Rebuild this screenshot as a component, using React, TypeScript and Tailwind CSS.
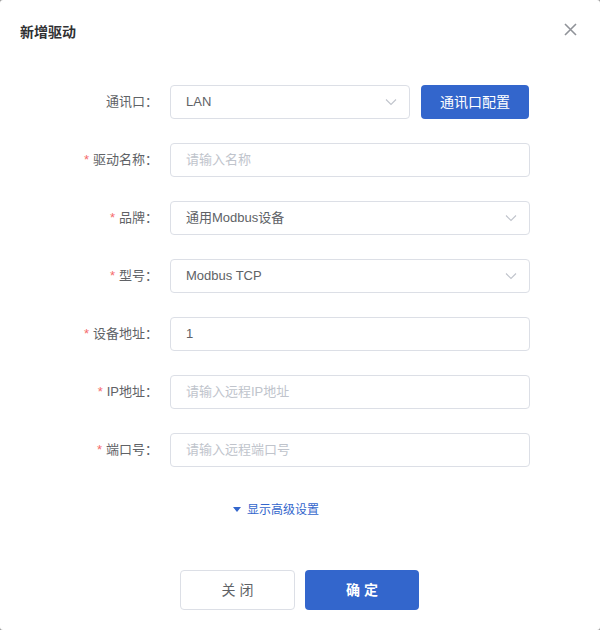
import React from "react";

const font = { fontFamily: '"Liberation Sans", "Noto Sans CJK SC", sans-serif' };

const Chevron: React.FC = () => (
  <svg width="12" height="8" viewBox="0 0 12 8" className="shrink-0">
    <path d="M1 1.5 L6 6.5 L11 1.5" fill="none" stroke="#c0c4cc" strokeWidth="1.1" />
  </svg>
);

const Label: React.FC<{ text: string; required?: boolean }> = ({ text, required }) => (
  <div className="w-[150px] shrink-0 pr-3 text-right text-[13px] text-[#606266] leading-[34px]">
    {required && <span className="mr-1 text-[#f56c6c]">*</span>}
    {text}：
  </div>
);

const Field: React.FC<{ value?: string; placeholder?: string; select?: boolean; className?: string }> = ({
  value,
  placeholder,
  select,
  className = "w-[360px]",
}) => (
  <div
    className={`${className} h-[34px] flex items-center justify-between rounded border border-[#dcdfe6] bg-white pl-[15px] pr-[12px] text-[13px]`}
  >
    <span className={value ? "text-[#606266]" : "text-[#c0c4cc]"}>{value || placeholder}</span>
    {select && <Chevron />}
  </div>
);

export default function App() {
  return (
    <div className="w-[600px] h-[630px] bg-[#9a9a9a]" style={font}>
      <div className="w-full h-full bg-white rounded-[3px]">
        {/* Header */}
        <div className="h-[64px] flex items-start justify-between pl-5 pr-[23px] pt-[23px]">
          <div className="text-[14px] font-bold leading-[18px] text-[#303133]">新增驱动</div>
          <svg width="13" height="13" viewBox="0 0 13 13" className="mt-0">
            <path d="M1 1 L12 12 M12 1 L1 12" stroke="#909399" strokeWidth="1.6" />
          </svg>
        </div>

        {/* Form */}
        <div className="pt-[21px] px-5 flex flex-col gap-6">
          <div className="flex">
            <Label text="通讯口" />
            <Field value="LAN" select className="w-[240px]" />
            <button className="ml-[11px] w-[108px] h-[34px] rounded bg-[#3366cc] text-white text-[14px]">
              通讯口配置
            </button>
          </div>
          <div className="flex">
            <Label text="驱动名称" required />
            <Field placeholder="请输入名称" />
          </div>
          <div className="flex">
            <Label text="品牌" required />
            <Field value="通用Modbus设备" select />
          </div>
          <div className="flex">
            <Label text="型号" required />
            <Field value="Modbus TCP" select />
          </div>
          <div className="flex">
            <Label text="设备地址" required />
            <Field value="1" />
          </div>
          <div className="flex">
            <Label text="IP地址" required />
            <Field placeholder="请输入远程IP地址" />
          </div>
          <div className="flex">
            <Label text="端口号" required />
            <Field placeholder="请输入远程端口号" />
          </div>
        </div>

        {/* Advanced */}
        <div className="mt-[33px] h-5 pl-[233px] flex items-center gap-[6px] text-[12px] text-[#3366cc]">
          <svg width="8" height="6" viewBox="0 0 8 6">
            <path d="M0 0 L8 0 L4 5 Z" fill="#3366cc" />
          </svg>
          <span>显示高级设置</span>
        </div>

        {/* Footer */}
        <div className="mt-[50px] flex justify-center gap-[10px] pr-px">
          <button className="w-[115px] h-[40px] rounded border border-[#dcdfe6] bg-white text-[14px] text-[#606266]">
            关 闭
          </button>
          <button className="w-[114px] h-[40px] rounded bg-[#3366cc] text-[14px] font-bold text-white">
            确 定
          </button>
        </div>
      </div>
    </div>
  );
}
